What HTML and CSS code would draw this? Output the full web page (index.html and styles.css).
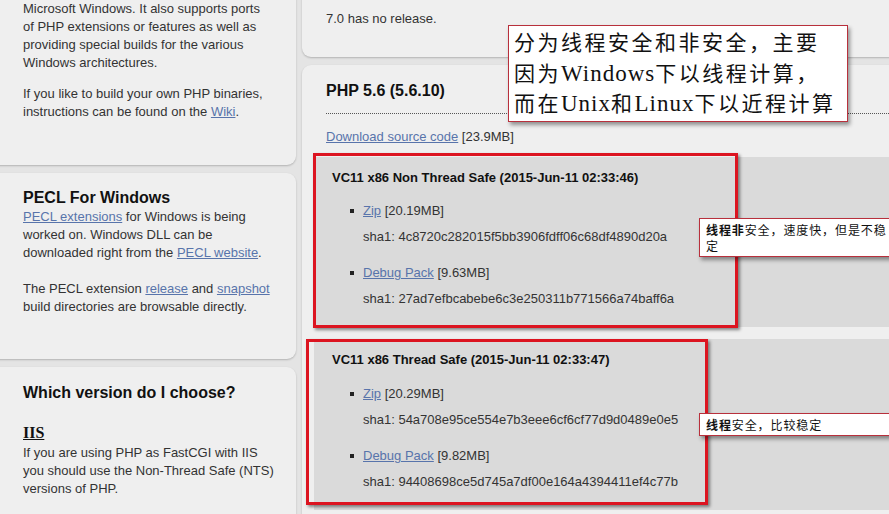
FILE: index.html
```html
<!DOCTYPE html>
<html lang="en">
<head>
    <meta charset="UTF-8">
    <meta name="viewport" content="width=device-width, initial-scale=1.0">
    <title>PHP For Windows: Binaries and sources Releases</title>
    <link rel="stylesheet" href="styles.css">
</head>
<body>
    <div class="page">
        <!-- Sidebar -->
        <div class="side">
            <div class="panel panel-intro">
                <p>Microsoft Windows. It also supports ports<br>of PHP extensions or features as well as<br>providing special builds for the various<br>Windows architectures.</p>
                <p>If you like to build your own PHP binaries,<br>instructions can be found on the <a href="#">Wiki</a>.</p>
            </div>
            <div class="panel panel-pecl">
                <h3>PECL For Windows</h3>
                <p><a href="#">PECL extensions</a> for Windows is being<br>worked on. Windows DLL can be<br>downloaded right from the <a href="#">PECL website</a>.</p>
                <p>The PECL extension <a href="#">release</a> and <a href="#">snapshot</a><br>build directories are browsable directly.</p>
            </div>
            <div class="panel panel-choose">
                <h3>Which version do I choose?</h3>
                <h4>IIS</h4>
                <p>If you are using PHP as FastCGI with IIS<br>you should use the Non-Thread Safe (NTS)<br>versions of PHP.</p>
            </div>
        </div>

        <!-- Releases -->
        <div class="main">
            <div class="panel panel-release">
                <p>7.0 has no release.</p>
            </div>
            <div class="panel panel-php56">
                <h3 class="version">PHP 5.6 (5.6.10)</h3>
                <p class="source"><a href="#">Download source code</a> [23.9MB]</p>

                <div class="build">
                    <h4>VC11 x86 Non Thread Safe (2015-Jun-11 02:33:46)</h4>
                    <ul>
                        <li>
                            <a href="#">Zip</a> [20.19MB]
                            <span class="sha">sha1: 4c8720c282015f5bb3906fdff06c68df4890d20a</span>
                        </li>
                        <li>
                            <a href="#">Debug Pack</a> [9.63MB]
                            <span class="sha">sha1: 27ad7efbcabebe6c3e250311b771566a74baff6a</span>
                        </li>
                    </ul>
                </div>

                <div class="build">
                    <h4>VC11 x86 Thread Safe (2015-Jun-11 02:33:47)</h4>
                    <ul>
                        <li>
                            <a href="#">Zip</a> [20.29MB]
                            <span class="sha">sha1: 54a708e95ce554e7b3eee6cf6cf77d9d0489e0e5</span>
                        </li>
                        <li>
                            <a href="#">Debug Pack</a> [9.82MB]
                            <span class="sha">sha1: 94408698ce5d745a7df00e164a4394411ef4c77b</span>
                        </li>
                    </ul>
                </div>
            </div>
        </div>
    </div>

    <!-- Annotations drawn over the page -->
    <div class="mark mark-nts"></div>
    <div class="mark mark-ts"></div>

    <div class="note note-big">
        分为线程安全和非安全，主要<br>
        因为<span class="latin">Windows</span>下以线程计算，<br>
        而在<span class="latin">Unix</span>和<span class="latin">Linux</span>下以近程计算
    </div>
    <div class="note note-small note-nts"><b>线程非</b>安全，速度快，但是不稳<br>定</div>
    <div class="note note-small note-ts"><b>线程</b>安全，比较稳定</div>
</body>
</html>
```

FILE: styles.css
```css
/* General */
html, body {
    overflow: hidden;
}

body {
    margin: 0;
    position: relative;
    height: 514px;
    background: #e4e4e4;
    font-family: 'Liberation Sans', Arial, sans-serif;
    font-size: 13px;
    line-height: 18px;
    color: #333333;
}

a {
    color: #5874ab;
    text-decoration: underline;
}

p {
    margin: 0;
}

.page {
    display: grid;
    grid-template-columns: 306px 1fr;
    column-gap: 6px;
    align-items: start;
    margin: -20px -30px 0 -10px;
}

.side,
.main {
    display: flex;
    flex-direction: column;
    gap: 8px;
}

/* Panels */
.panel {
    background: #efefef;
    border-radius: 9px;
    box-shadow: 0 1px 2px rgba(0, 0, 0, 0.22);
}

.side .panel {
    padding-left: 33px;
    padding-right: 12px;
}

.panel h3 {
    margin: 0;
    font-size: 16px;
    line-height: 20px;
    font-weight: bold;
    color: #111111;
}

.panel-intro {
    padding-top: 20px;
    padding-bottom: 44px;
}

.panel-intro p + p {
    margin-top: 13px;
}

.panel-pecl {
    padding-top: 15px;
    padding-bottom: 43px;
}

.panel-pecl p + p {
    margin-top: 18px;
}

.panel-choose {
    padding-top: 16px;
    padding-bottom: 30px;
}

.panel-choose h4 {
    margin: 19px 0 0;
    font-family: 'Liberation Serif', 'Times New Roman', serif;
    font-size: 16px;
    line-height: 21px;
    font-weight: bold;
    text-decoration: underline;
    color: #111111;
}

.panel-choose h4 + p {
    margin-top: 1px;
}

/* Release column */
.main .panel {
    padding-left: 24px;
}

.panel-release {
    padding-top: 30px;
    padding-bottom: 29px;
}

.panel-php56 {
    padding-top: 16px;
    padding-bottom: 40px;
}

.version {
    padding-bottom: 12px;
    border-bottom: 1px dotted #555555;
}

.source {
    margin-top: 14px;
    margin-bottom: 11px;
}

/* Builds */
.build {
    margin-left: -12px;
    margin-bottom: 12px;
    padding: 12px 18px 19px;
    background: #dadada;
}

.build h4 {
    margin: 0;
    font-size: 13px;
    line-height: 18px;
    font-weight: bold;
    color: #111111;
}

.build ul {
    list-style: none;
    margin: 15px 0 0;
    padding: 0;
}

.build + .build ul {
    margin-top: 16px;
}

.build li {
    position: relative;
    padding-left: 31px;
}

.build li::before {
    content: '';
    position: absolute;
    left: 18px;
    top: 7px;
    width: 4px;
    height: 4px;
    background: #222222;
}

.build li + li {
    margin-top: 18px;
}

.sha {
    display: block;
    margin-top: 8px;
}

/* Annotation rectangles */
.mark {
    position: absolute;
    border: 3px solid #dc1420;
    box-shadow: 2px 2px 3px rgba(0, 0, 0, 0.45);
}

.mark-nts {
    left: 313px;
    top: 153px;
    width: 419px;
    height: 169px;
}

.mark-ts {
    left: 306px;
    top: 339px;
    width: 396px;
    height: 160px;
}

/* Callouts */
.note {
    position: absolute;
    background: #ffffff;
    border: 1px solid #b8303c;
    box-shadow: 2px 3px 4px rgba(0, 0, 0, 0.4);
    color: #111111;
    font-family: 'Liberation Serif', 'Noto Sans CJK SC', serif;
}

.note-big {
    left: 508px;
    top: 25px;
    width: 333px;
    height: 92px;
    padding: 3px 0 0 5px;
    font-size: 21px;
    line-height: 29.5px;
    letter-spacing: 2.5px;
    white-space: nowrap;
}

.note-big .latin {
    font-size: 23px;
    letter-spacing: 1px;
}

.note-small {
    left: 699px;
    width: 184px;
    padding: 3px 30px 2px 6px;
    font-family: 'Noto Sans CJK SC', sans-serif;
    font-size: 12px;
    line-height: 16px;
    letter-spacing: 0.9px;
    white-space: nowrap;
}

.note-small b {
    font-weight: bold;
}

.note-nts {
    top: 218px;
}

.note-ts {
    top: 413px;
}
```
